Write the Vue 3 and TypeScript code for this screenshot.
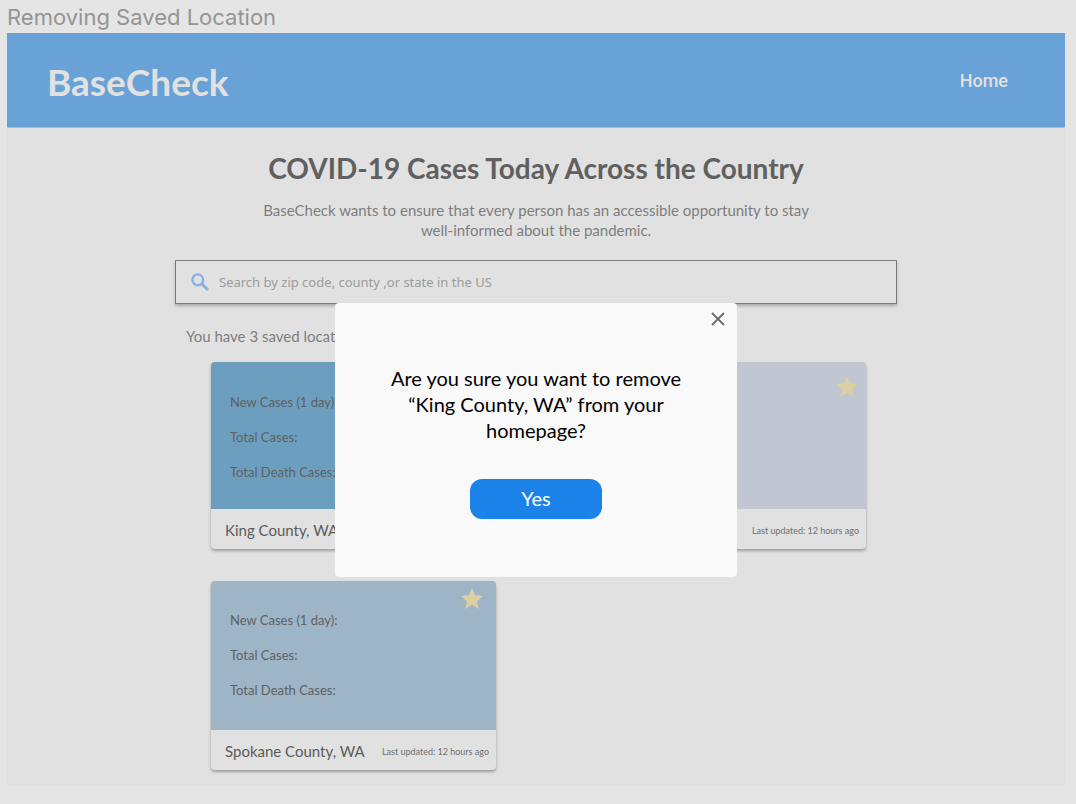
<script setup lang="ts">
import { ref } from 'vue'

interface SavedLocation {
  id: number
  name: string
  tone: 'deep' | 'pale' | 'soft'
  metrics: string[]
}

const query = ref('')
const dialogOpen = ref(true)
const pendingId = ref(1)
const metrics = ['New Cases (1 day):', 'Total Cases:', 'Total Death Cases:']
const locations = ref<SavedLocation[]>([
  { id: 1, name: 'King County, WA', tone: 'deep', metrics },
  { id: 2, name: '', tone: 'pale', metrics: [] },
  { id: 3, name: 'Spokane County, WA', tone: 'soft', metrics },
])

function askToRemove(id: number) {
  pendingId.value = id
  dialogOpen.value = true
}

function confirmRemoval() {
  locations.value = locations.value.filter((l) => l.id !== pendingId.value)
  dialogOpen.value = false
}

function nameOf(id: number) {
  return locations.value.find((l) => l.id === id)?.name ?? ''
}
</script>

<template>
  <div class="canvas">
    <div class="frame-label">Removing Saved Location</div>
    <div class="frame">
      <header class="topbar">
        <div class="logo">BaseCheck</div>
        <nav><a class="home" href="#">Home</a></nav>
      </header>

      <main class="content">
        <h1>COVID-19 Cases Today Across the Country</h1>
        <p class="intro">
          BaseCheck wants to ensure that every person has an accessible opportunity to stay
          well-informed about the pandemic.
        </p>

        <form class="search" role="search" @submit.prevent>
          <label for="place" aria-label="Search locations">
            <svg viewBox="0 0 18 18" width="18" height="18" fill="none" stroke="#8db0e2" stroke-width="2.4">
              <circle cx="6.8" cy="6.8" r="5.4" />
              <path d="M10.6 10.6 17 17" stroke-width="3" />
            </svg>
          </label>
          <input id="place" v-model="query" type="text" placeholder="Search by zip code, county ,or state in the US" />
        </form>

        <p class="count">You have {{ locations.length }} saved locations</p>

        <div class="cards">
          <article v-for="loc in locations" :key="loc.id" class="card">
            <div class="card-body" :class="loc.tone">
              <p v-for="m in loc.metrics" :key="m">{{ m }}</p>
              <button class="star" type="button" aria-label="Remove saved location" @click="askToRemove(loc.id)">
                <svg viewBox="2 2 20 19" width="22" height="21">
                  <path
                    d="M12 17.27 18.18 21l-1.64-7.03L22 9.24l-7.19-.61L12 2 9.19 8.63 2 9.24l5.46 4.73L5.82 21z"
                    fill="#decfa2"
                  />
                </svg>
              </button>
            </div>
            <footer>
              <span class="name">{{ loc.name }}</span>
              <span class="updated">Last updated: 12 hours ago</span>
            </footer>
          </article>
        </div>
      </main>

      <div v-if="dialogOpen" class="overlay">
        <section class="dialog" role="dialog" aria-modal="true" aria-labelledby="question">
          <button class="close" type="button" aria-label="Close" @click="dialogOpen = false">
            <svg viewBox="0 0 14 14" width="14" height="14" fill="none" stroke="#6c6c6c" stroke-width="1.8">
              <path d="M1 1 13 13M13 1 1 13" />
            </svg>
          </button>
          <p id="question">Are you sure you want to remove “{{ nameOf(pendingId) }}” from your homepage?</p>
          <button class="yes" type="button" @click="confirmRemoval">Yes</button>
        </section>
      </div>
    </div>
  </div>
</template>

<style>
body {
  margin: 0;
  background: #e5e5e5;
}
</style>

<style scoped>
.canvas {
  min-height: 100vh;
  box-sizing: border-box;
  padding: 0 11px 19px 7px;
  background: #e5e5e5;
  font-family: Lato, "Noto Sans", sans-serif;
}
.frame-label {
  height: 33px;
  line-height: 34px;
  font-family: Inter, sans-serif;
  font-size: 22px;
  color: #949494;
}
.frame {
  position: relative;
  background: #e1e1e1;
}
.topbar {
  display: flex;
  align-items: center;
  justify-content: space-between;
  height: 95px;
  padding: 0 57px 0 40px;
  border-bottom: 1px solid #b4bcc4;
  box-sizing: border-box;
  background: #69a2d6;
}
.logo {
  padding-top: 4px;
  font-size: 37px;
  line-height: 44px;
  font-weight: 700;
  color: #e1e1e1;
}
.home {
  font-family: Roboto, sans-serif;
  font-size: 18px;
  font-weight: 500;
  color: #e1e1e1;
  text-decoration: none;
}
.content {
  max-width: 722px;
  margin: 0 auto;
  padding: 23px 0 15px;
}
h1 {
  margin: 0;
  font-size: 28px;
  line-height: 34px;
  font-weight: 700;
  text-align: center;
  color: #606060;
}
.intro {
  max-width: 570px;
  margin: 15px auto 20px;
  font-size: 15px;
  line-height: 20px;
  text-align: center;
  color: #7e7e7e;
}
.search {
  display: flex;
  align-items: center;
  gap: 10px;
  height: 44px;
  box-sizing: border-box;
  padding: 0 15px;
  border: 1px solid #7c7c7c;
  box-shadow: 0 2px 3px rgba(0, 0, 0, 0.25);
}
.search label {
  display: flex;
}
.search input {
  flex: 1;
  min-width: 0;
  padding: 0;
  border: 0;
  outline: 0;
  background: transparent;
  font-family: "Noto Sans", sans-serif;
  font-size: 13px;
  line-height: 20px;
  color: #606060;
}
.search input::placeholder {
  color: #9c9c9c;
  opacity: 1;
}
.count {
  margin: 22px 0 16px 11px;
  font-size: 15px;
  line-height: 20px;
  color: #7e7e7e;
}
.cards {
  display: grid;
  grid-template-columns: repeat(auto-fill, 285px);
  gap: 32px 85px;
  padding: 0 30px 0 36px;
}
.card {
  border-radius: 4px;
  background: #e1e1e1;
  box-shadow: 0 2px 3px rgba(0, 0, 0, 0.3);
}
.card-body {
  position: relative;
  display: flex;
  flex-direction: column;
  gap: 15px;
  min-height: 147px;
  box-sizing: border-box;
  padding: 30px 19px 0;
  border-radius: 4px 4px 0 0;
}
.card-body p {
  margin: 0;
  font-size: 13px;
  line-height: 20px;
  color: #606060;
}
.deep {
  background: #6c9fbf;
}
.pale {
  background: #c0c6d2;
}
.soft {
  min-height: 149px;
  padding-top: 29px;
  background: #9eb5c8;
}
.star {
  position: absolute;
  top: 7px;
  right: 13px;
  display: flex;
  padding: 0;
  border: 0;
  background: none;
  cursor: pointer;
}
.pale .star {
  top: 14px;
  right: 8px;
}
.card footer {
  display: flex;
  align-items: center;
  justify-content: space-between;
  height: 40px;
  padding: 0 7px 0 14px;
}
.name {
  margin-top: 2px;
  font-size: 15px;
  line-height: 20px;
  color: #5c5c5c;
}
.updated {
  margin-top: 4px;
  font-size: 9px;
  line-height: 12px;
  color: #707070;
}
.overlay {
  position: absolute;
  inset: 0;
  display: flex;
  justify-content: center;
  align-items: flex-start;
  padding-top: 270px;
}
.dialog {
  position: relative;
  display: flex;
  flex-direction: column;
  align-items: center;
  width: 402px;
  box-sizing: border-box;
  padding: 62px 40px 58px;
  border-radius: 4px;
  background: #f9f9f9;
}
.dialog p {
  max-width: 300px;
  margin: 0 0 36px;
  font-size: 20px;
  line-height: 26px;
  text-align: center;
  color: #000;
}
.close {
  position: absolute;
  top: 9px;
  right: 12px;
  display: flex;
  padding: 0;
  border: 0;
  background: none;
  cursor: pointer;
}
.yes {
  width: 132px;
  height: 40px;
  padding: 0 0 2px;
  border: 0;
  border-radius: 12px;
  background: #1b82ea;
  color: #fff;
  font-family: inherit;
  font-size: 20px;
  line-height: 26px;
  cursor: pointer;
}
</style>
